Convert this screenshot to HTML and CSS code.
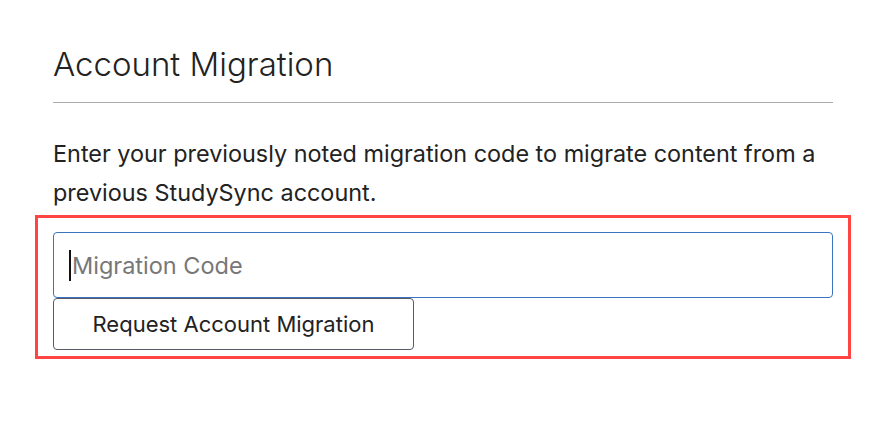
FILE: index.html
```html
<!DOCTYPE html>
<html>
<head>
<meta charset="utf-8">
<link rel="stylesheet" href="styles.css">
</head>
<body>
<div class="page">
  <h1 class="title">Account Migration</h1>
  <hr class="rule">
  <p class="intro">Enter your previously noted migration code to migrate content from a previous StudySync account.</p>
  <div class="highlight">
    <div class="field">
      <input class="code-input" type="text" placeholder="Migration Code">
      <span class="caret"></span>
    </div>
    <button class="request-btn" type="button">Request Account Migration</button>
  </div>
</div>
</body>
</html>
```

FILE: styles.css
```css
html, body {
  margin: 0;
  padding: 0;
  background: #fff;
}
body {
  font-family: "Inter", "Open Sans", sans-serif;
  color: #222;
}
.page {
  padding: 43px 57px 0 53px;
}
.title {
  margin: 0;
  font-weight: 300;
  font-size: 33px;
  line-height: 42px;
  color: #222;
}
.rule {
  margin: 17px 0 0 0;
  border: 0;
  border-top: 1px solid #aaa;
  height: 0;
}
.intro {
  margin: 31px 0 0 0;
  font-size: 23.4px;
  line-height: 39px;
  color: #222;
  width: 780px;
}
.highlight {
  box-sizing: border-box;
  margin: 3px 0 0 -18px;
  width: 816px;
  border: 3px solid #f44;
  padding: 14px 15px 6px 15px;
  display: flex;
  flex-direction: column;
  align-items: flex-start;
}
.field {
  position: relative;
}
.code-input {
  display: block;
  box-sizing: border-box;
  width: 780px;
  height: 66px;
  margin: 0;
  padding: 0 16px 0 18px;
  border: 1px solid #3a74c0;
  border-radius: 4px;
  font-family: inherit;
  font-size: 23.5px;
  color: #222;
  outline: none;
}
.code-input::placeholder {
  color: #777;
}
.caret {
  position: absolute;
  left: 16px;
  top: 18px;
  width: 2px;
  height: 31px;
  background: #111;
}
.request-btn {
  box-sizing: border-box;
  width: 361px;
  height: 52px;
  margin: 0;
  border: 1px solid #555a66;
  border-radius: 4px;
  background: #fff;
  font-family: inherit;
  font-size: 22px;
  color: #222;
}
```
